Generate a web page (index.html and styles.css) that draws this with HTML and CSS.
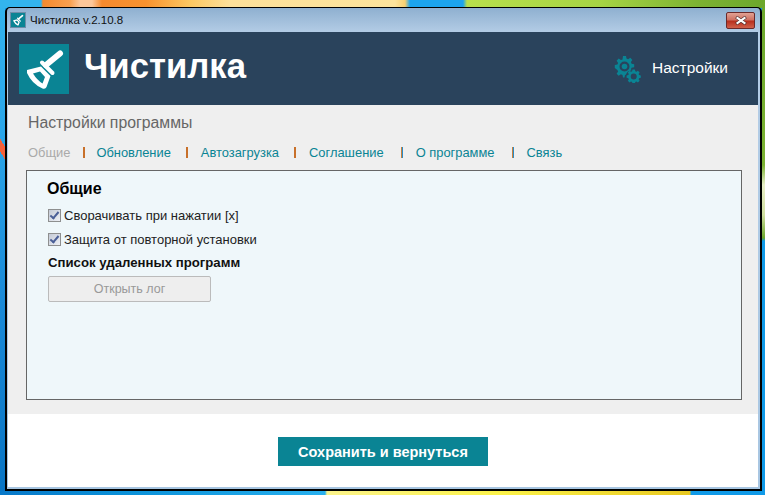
FILE: index.html
```html
<!DOCTYPE html>
<html lang="ru">
<head>
    <meta charset="UTF-8">
    <meta name="viewport" content="width=device-width, initial-scale=1.0">
    <title>Чистилка v.2.10.8</title>
    <link rel="stylesheet" href="styles.css">
</head>
<body>
    <div class="desktop">
        <div class="window">
            <div class="titlebar">
                <div class="title-left">
                    <span class="app-icon">
                        <svg viewBox="0 0 50 50" width="14" height="14"><use href="#brush"></use></svg>
                    </span>
                    <span class="title-text">Чистилка v.2.10.8</span>
                </div>
                <div class="close-btn">
                    <svg viewBox="0 0 16 10" width="14" height="9">
                        <path d="M2.5 1 L13.5 9 M13.5 1 L2.5 9" stroke="#4a2a2a" stroke-width="3.8" fill="none"></path>
                        <path d="M3 1.5 L13 8.5 M13 1.5 L3 8.5" stroke="#fff" stroke-width="2.4" fill="none"></path>
                    </svg>
                </div>
            </div>
            <header class="app-header">
                <div class="brand">
                    <div class="logo">
                        <svg viewBox="0 0 50 50" width="50" height="50">
                            <g id="brush">
                                <path d="M27 21 L41 9.5" stroke="#fff" stroke-width="6" stroke-linecap="round" fill="none"></path>
                                <path d="M23 18.5 L33.5 29" stroke="#fff" stroke-width="4" stroke-linecap="round" fill="none"></path>
                                <path d="M8 26 L22 22.5 L31.5 32 L27.5 43 Q26.5 45.5 23.5 44.5 Q13 40 8 29 Z M14 29.5 Q18 36 23.5 39.5 L26 33 L21 27.5 Z" fill="#fff" fill-rule="evenodd"></path>
                            </g>
                        </svg>
                    </div>
                    <h1>Чистилка</h1>
                </div>
                <div class="settings-link">
                    <svg class="gears" viewBox="0 0 28 28" width="28" height="28">
                        <g fill="#0a8494" fill-rule="evenodd">
                            <path d="M9 1h3l.5 2.6 1.6.7 2.2-1.5 2.1 2.1-1.5 2.2.7 1.6 2.6.5v3l-2.6.5-.7 1.6.6 1-3.6 1.2-1.6 2.2-.5 1-.8.3-.5 2.6H9l-.5-2.6-1.6-.7-2.2 1.5-2.1-2.1 1.5-2.2-.7-1.6L.8 13v-3l2.6-.5.7-1.6-1.5-2.2 2.1-2.1 2.2 1.5 1.6-.7zM10.5 6.5a5 5 0 1 0 0 10 5 5 0 0 0 0-10z"></path>
                            <circle cx="10.5" cy="11.5" r="2.8"></circle>
                            <path d="M18.5 14.5h2.4l.4 1.7 1.1.5 1.5-1 1.7 1.7-1 1.5.5 1.1 1.7.4v2.4l-1.7.4-.5 1.1 1 1.5-1.7 1.7-1.5-1-1.1.5-.4 1.7h-2.4l-.4-1.7-1.1-.5-1.5 1-1.7-1.7 1-1.5-.5-1.1-1.7-.4v-2.4l1.7-.4.5-1.1-1-1.5 1.7-1.7 1.5 1 1.1-.5zM19.7 18.5a3 3 0 1 0 0 6 3 3 0 0 0 0-6z"></path>
                        </g>
                    </svg>
                    <span class="settings-text">Настройки</span>
                </div>
            </header>
            <main class="content">
                <h2 class="page-title">Настройки программы</h2>
                <nav class="tabs">
                    <a class="tab active">Общие</a>
                    <span class="sep"></span>
                    <a class="tab">Обновление</a>
                    <span class="sep"></span>
                    <a class="tab">Автозагрузка</a>
                    <span class="sep"></span>
                    <a class="tab">Соглашение</a>
                    <span class="sep blue"></span>
                    <a class="tab">О программе</a>
                    <span class="sep blue"></span>
                    <a class="tab">Связь</a>
                </nav>
                <section class="panel">
                    <h3>Общие</h3>
                    <label class="check"><span class="box"></span>Сворачивать при нажатии [x]</label>
                    <label class="check"><span class="box"></span>Защита от повторной установки</label>
                    <h4>Список удаленных программ</h4>
                    <button class="log-btn">Открыть лог</button>
                </section>
            </main>
            <footer class="bottom">
                <button class="save-btn">Сохранить и вернуться</button>
            </footer>
        </div>
    </div>
</body>
</html>
```
FILE: styles.css
```css
html, body {
    margin: 0;
    padding: 0;
    height: 100%;
    overflow: hidden;
}
body {
    font-family: 'Liberation Sans', Arial, sans-serif;
}
.desktop {
    position: relative;
    width: 765px;
    height: 495px;
    background:
        linear-gradient(90deg, #33b4ee 0, #33b4ee 41px, #f58a2e 43px, #f8a050 70px, #fcc79a 80px, #fcc79a 92px, #f58a2e 102px, #f8922e 146px, #fcc862 190px, #fde09a 230px, #fde49c 395px, #f8d070 405px, #1ca4ee 410px, #1ca4ee 463px, #b8e04c 467px, #a6d444 600px, #7cb232 700px, #6ca72c 765px) top / 100% 8px no-repeat,
        linear-gradient(90deg, #0878c8 0, #0a90d8 120px, #28b0ee 325px, #fbf38a 327px, #fbf24a 500px, #e8c820 690px, #109ae8 691px, #109ae8 100%) bottom / 100% 4px no-repeat,
        linear-gradient(60deg, transparent 35%, #f4603a 35%, #f4603a 65%, transparent 65%) 0 132px / 5px 34px no-repeat,
        linear-gradient(180deg, #33b4ee 0, #2aa6ea 130px, #1a8ad8 300px, #0874c4 495px) left / 5px 100% no-repeat,
        linear-gradient(180deg, #6ca72c 0, #7cb232 165px, #e8efc8 185px, #d0dfa0 215px, #6ca72c 238px, #109ae8 241px) right / 3px 100% no-repeat,
        #0e9aea;
}
.window {
    position: absolute;
    left: 5px;
    top: 7px;
    width: 757px;
    height: 484px;
    box-sizing: border-box;
    border: solid #000;
    border-width: 1px 2px 2px;
    border-radius: 5px 5px 0 0;
    padding: 0 2px 2px 1px;
    background: linear-gradient(180deg, #8fb0d0 0, #b4cde6 25px, #a8c6e2 100%);
    display: flex;
    flex-direction: column;
}
.titlebar {
    height: 24px;
    flex: none;
    display: flex;
    justify-content: space-between;
}
.title-left {
    display: flex;
    align-items: center;
    gap: 4px;
    margin-left: 2px;
}
.app-icon {
    width: 16px;
    height: 16px;
    box-sizing: border-box;
    background: #0a8494;
    border: 1px solid #6d8ea8;
    display: block;
    line-height: 0;
}
.title-text {
    font-size: 11.5px;
    color: #111;
}
.close-btn {
    width: 29px;
    height: 17px;
    margin: 4px 3px 0 0;
    box-sizing: border-box;
    border: 1px solid #6b2a2a;
    border-radius: 2px;
    background: linear-gradient(180deg, #e2a294 0, #cf7263 45%, #b8301e 55%, #d0604a 100%);
    display: flex;
    align-items: center;
    justify-content: center;
}
.app-header {
    height: 73px;
    flex: none;
    background: #2a435c;
    display: flex;
    justify-content: space-between;
    align-items: center;
    color: #fff;
}
.brand {
    display: flex;
    align-items: center;
    gap: 15px;
    margin-left: 11px;
}
.logo {
    width: 50px;
    height: 50px;
    background: #0a8494;
    line-height: 0;
}
.brand h1 {
    margin: 0 0 4px;
    font-size: 34.7px;
    font-weight: bold;
    color: #fff;
}
.settings-link {
    display: flex;
    align-items: center;
    gap: 10px;
    margin-right: 30px;
    font-size: 15.5px;
}
.settings-text {
    margin-bottom: 2px;
}
.content {
    height: 309px;
    flex: none;
    box-sizing: border-box;
    background: #efefef;
    padding: 9px 16px 0 18px;
}
.page-title {
    margin: 0 0 0 2px;
    font-size: 15.8px;
    font-weight: normal;
    line-height: 18px;
    color: #666;
}
.tabs {
    display: flex;
    align-items: center;
    margin: 12px 0 10px 2px;
    height: 16px;
    font-size: 12.9px;
}
.tab {
    color: #0a8494;
}
.tab.active {
    color: #aaa;
}
.sep {
    width: 2px;
    height: 11px;
    margin: 1px 13px 0 15px;
    background: #c8702a;
}
.tab.active + .sep {
    margin-left: 13px;
    margin-right: 11px;
}
.sep.blue {
    background: linear-gradient(90deg, #c8803e 50%, #2a8cc8 50%);
    margin-left: 17px;
}
.panel {
    height: 230px;
    box-sizing: border-box;
    border: 1px solid #666;
    background: #eff7fa;
    padding: 9px 20px;
}
.panel h3 {
    margin: 0 0 10px;
    font-size: 16px;
    line-height: 17px;
    color: #000;
}
.check {
    display: flex;
    align-items: center;
    gap: 3px;
    height: 16px;
    margin: 0 0 8px 1px;
    font-size: 13px;
    color: #222;
}
.box {
    width: 11px;
    height: 11px;
    border: 1px solid #8e8f8f;
    background: linear-gradient(135deg, #c4cad6 0, #eef0f5 100%);
    position: relative;
}
.box::after {
    content: "";
    position: absolute;
    left: 3px;
    top: 0;
    width: 3px;
    height: 7px;
    border: solid #4a5f97;
    border-width: 0 2px 2px 0;
    transform: rotate(40deg);
}
.panel h4 {
    margin: 0 0 5px 1px;
    font-size: 13.2px;
    line-height: 16px;
    color: #111;
}
.log-btn {
    display: block;
    width: 163px;
    height: 26px;
    margin-left: 1px;
    border: 1px solid #bbb;
    border-radius: 2px;
    background: #eee;
    color: #999;
    font-family: inherit;
    font-size: 12.5px;
}
.bottom {
    flex: 1;
    background: #fff;
    display: flex;
    justify-content: center;
    padding-top: 23px;
    box-sizing: border-box;
}
.save-btn {
    width: 210px;
    height: 29px;
    border: none;
    background: #0a8494;
    color: #fff;
    font-family: inherit;
    font-size: 14.5px;
    font-weight: bold;
}
```
